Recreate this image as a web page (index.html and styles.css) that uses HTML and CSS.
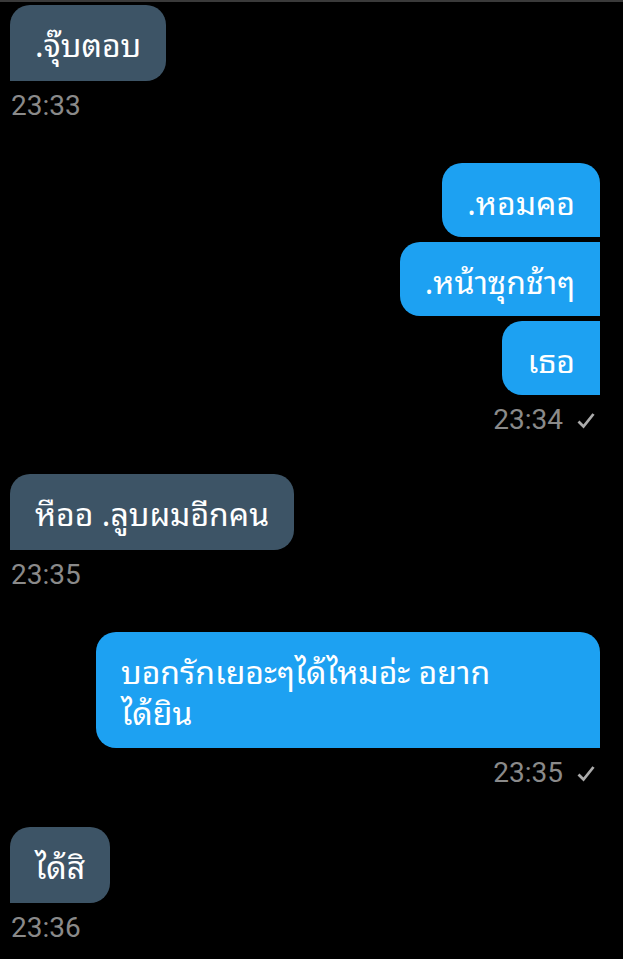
FILE: index.html
```html
<!DOCTYPE html>
<html lang="th">
<head>
  <meta charset="UTF-8" />
  <meta name="viewport" content="width=device-width, initial-scale=1.0"/>
  <title>แชท</title>
  <link rel="stylesheet" href="styles.css">
</head>
<body>
  <div class="chat">
    <div class="group in">
      <div class="bubble">.จุ๊บตอบ</div>
      <div class="time">23:33</div>
    </div>

    <div class="group out">
      <div class="bubble first">.หอมคอ</div>
      <div class="bubble">.หน้าซุกช้าๆ</div>
      <div class="bubble">เธอ</div>
      <div class="time">23:34 <svg class="tick" viewBox="0 0 18 17"><path d="M1.5 9.5 L6.5 14.5 L16.5 2" fill="none" stroke="currentColor" stroke-width="2.8"/></svg></div>
    </div>

    <div class="group in">
      <div class="bubble">หืออ .ลูบผมอีกคน</div>
      <div class="time">23:35</div>
    </div>

    <div class="group out">
      <div class="bubble first wide">บอกรักเยอะๆได้ไหมอ่ะ อยาก<br>ได้ยิน</div>
      <div class="time">23:35 <svg class="tick" viewBox="0 0 18 17"><path d="M1.5 9.5 L6.5 14.5 L16.5 2" fill="none" stroke="currentColor" stroke-width="2.8"/></svg></div>
    </div>

    <div class="group in">
      <div class="bubble">ได้สิ</div>
      <div class="time">23:36</div>
    </div>
  </div>
</body>
</html>
```

FILE: styles.css
```css
body {
  margin: 0;
  background-color: #000;
  font-family: "Noto Sans Thai Looped", "Noto Sans Thai", "Noto Sans", Roboto, sans-serif;
}
.chat {
  border-top: 2px solid #3a3a3a;
  padding: 3px 23px 0 10px;
  display: flex;
  flex-direction: column;
  gap: 37px;
}
.group {
  display: flex;
  flex-direction: column;
  gap: 5px;
}
.group.in { align-items: flex-start; }
.group.out {
  align-items: flex-end;
  margin-top: 3px;
}
.bubble {
  color: #fff;
  font-size: 32px;
  line-height: 41px;
  padding: 17px 25px;
  box-sizing: border-box;
}
.in .bubble {
  background-color: #3d5466;
  border-radius: 20px 20px 20px 0;
  padding-bottom: 18px;
}
.in .bubble:last-of-type { padding-right: 29px; }
.out .bubble {
  background-color: #1da1f2;
  border-radius: 20px 0 0 20px;
  padding-top: 16.5px;
  padding-bottom: 16.5px;
}
.out .bubble.first { border-radius: 20px 20px 0 20px; }
.bubble.wide {
  width: 504px;
  padding-top: 17px;
  padding-bottom: 17px;
}
.time {
  font-family: Roboto, "Liberation Sans", sans-serif;
  font-size: 28px;
  line-height: 34px;
  color: #8a8a8a;
  margin-top: 3px;
  display: flex;
  align-items: center;
  gap: 14px;
}
.in .time { padding-left: 1px; }
.out .time { padding-right: 5px; }
.tick {
  width: 18px;
  height: 17px;
  color: #ababab;
}
```
